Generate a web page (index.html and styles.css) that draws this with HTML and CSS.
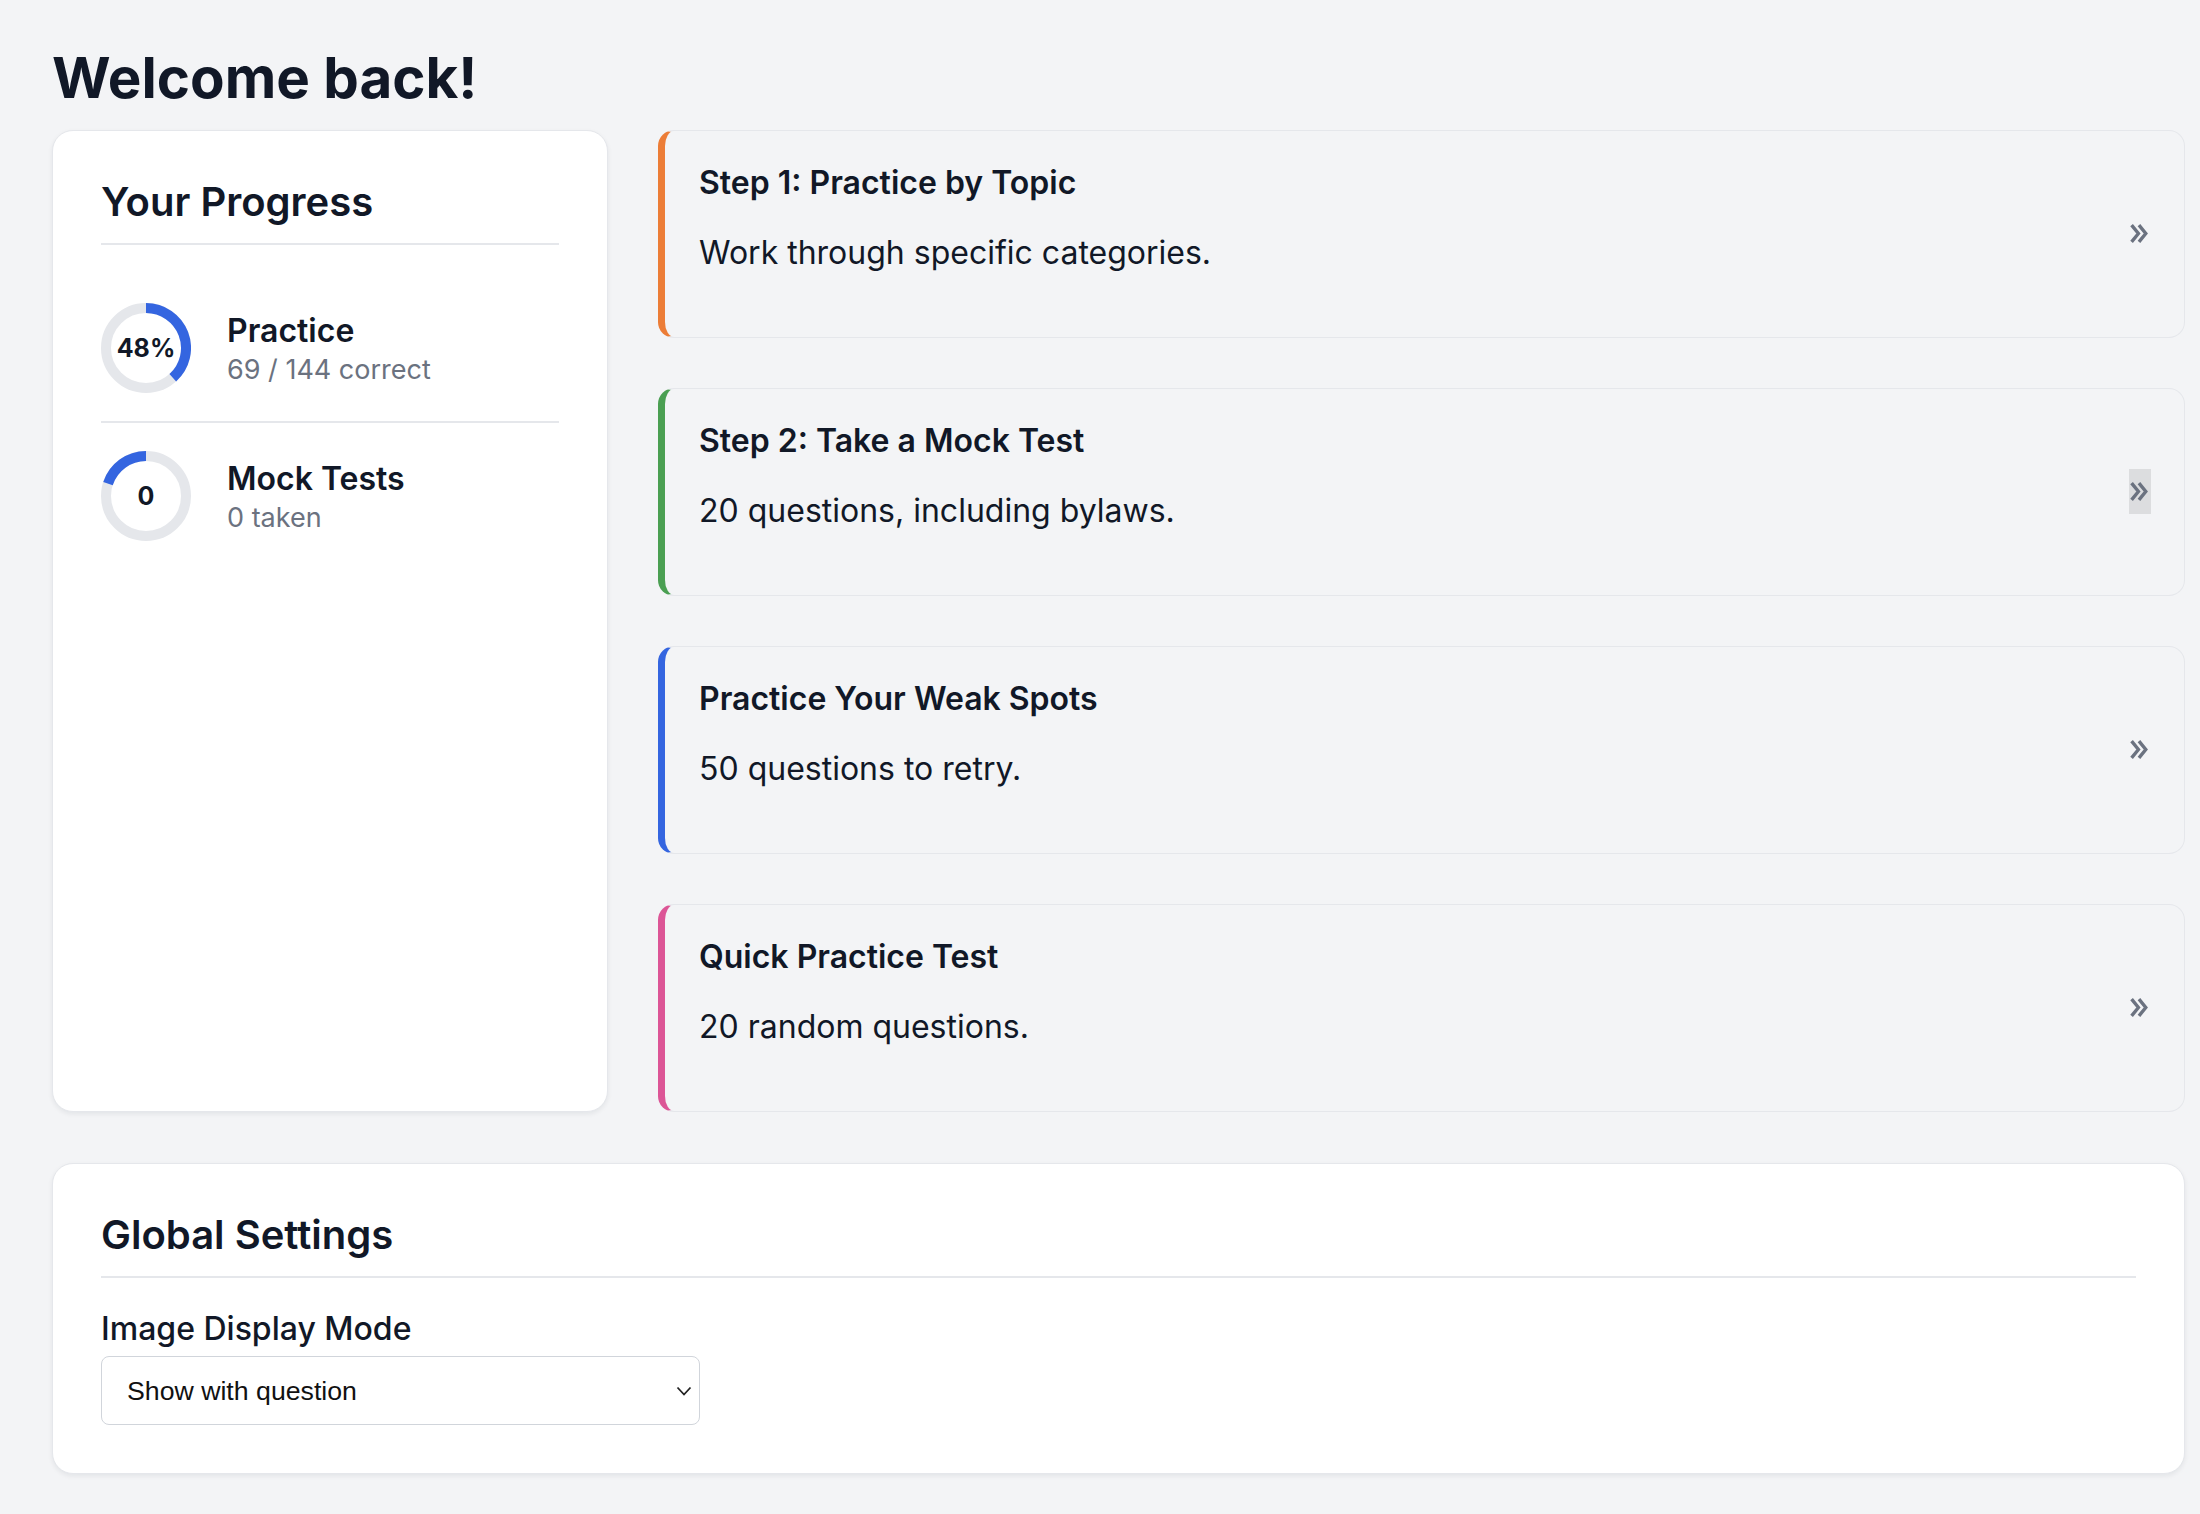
FILE: index.html
```html
<!DOCTYPE html>
<html lang="en">
<head>
<meta charset="utf-8">
<title>Dashboard</title>
<link rel="stylesheet" href="styles.css">
</head>
<body>
<main class="page">
  <h1 class="welcome">Welcome back!</h1>
  <div class="grid">
    <section class="card progress">
      <h2 class="card-title">Your Progress</h2>
      <div class="stat">
        <div class="ring">
          <svg viewBox="0 0 90 90" width="90" height="90">
            <circle cx="45" cy="45" r="40" fill="none" stroke="#e5e7eb" stroke-width="10"/>
            <path d="M45 5 A40 40 0 0 1 71.8 74.7" fill="none" stroke="#3465e0" stroke-width="10"/>
          </svg>
          <span class="ring-label">48%</span>
        </div>
        <div class="stat-text">
          <div class="stat-name">Practice</div>
          <div class="stat-sub">69 / 144 correct</div>
        </div>
      </div>
      <div class="stat">
        <div class="ring">
          <svg viewBox="0 0 90 90" width="90" height="90">
            <circle cx="45" cy="45" r="40" fill="none" stroke="#e5e7eb" stroke-width="10"/>
            <path d="M7 32.6 A40 40 0 0 1 45 5" fill="none" stroke="#3465e0" stroke-width="10"/>
          </svg>
          <span class="ring-label">0</span>
        </div>
        <div class="stat-text">
          <div class="stat-name">Mock Tests</div>
          <div class="stat-sub">0 taken</div>
        </div>
      </div>
    </section>
    <div class="steps">
      <a class="step step-orange" href="#">
        <div class="step-body">
          <div class="step-title">Step 1: Practice by Topic</div>
          <div class="step-desc">Work through specific categories.</div>
        </div>
        <span class="go"><svg viewBox="0 0 19 18" width="20" height="19"><polyline points="1.5,1 8,9 1.5,17" /><polyline points="8.5,1 15,9 8.5,17" /></svg></span>
      </a>
      <a class="step step-green" href="#">
        <div class="step-body">
          <div class="step-title">Step 2: Take a Mock Test</div>
          <div class="step-desc">20 questions, including bylaws.</div>
        </div>
        <span class="go go-active"><svg viewBox="0 0 19 18" width="20" height="19"><polyline points="1.5,1 8,9 1.5,17" /><polyline points="8.5,1 15,9 8.5,17" /></svg></span>
      </a>
      <a class="step step-blue" href="#">
        <div class="step-body">
          <div class="step-title">Practice Your Weak Spots</div>
          <div class="step-desc">50 questions to retry.</div>
        </div>
        <span class="go"><svg viewBox="0 0 19 18" width="20" height="19"><polyline points="1.5,1 8,9 1.5,17" /><polyline points="8.5,1 15,9 8.5,17" /></svg></span>
      </a>
      <a class="step step-pink" href="#">
        <div class="step-body">
          <div class="step-title">Quick Practice Test</div>
          <div class="step-desc">20 random questions.</div>
        </div>
        <span class="go"><svg viewBox="0 0 19 18" width="20" height="19"><polyline points="1.5,1 8,9 1.5,17" /><polyline points="8.5,1 15,9 8.5,17" /></svg></span>
      </a>
    </div>
  </div>
  <section class="card settings">
    <h2 class="card-title settings-title">Global Settings</h2>
    <label class="field-label" for="imgmode">Image Display Mode</label>
    <div class="select-wrap">
      <select id="imgmode" class="select">
        <option>Show with question</option>
        <option>Show after answer</option>
        <option>Hide images</option>
      </select>
      <svg class="select-arrow" viewBox="0 0 16 10" width="16" height="10"><polyline points="1.5,1.5 8,8.5 14.5,1.5"/></svg>
    </div>
  </section>
</main>
</body>
</html>
```

FILE: styles.css
```css
* { box-sizing: border-box; }

html, body {
  margin: 0;
  background: #f3f4f6;
}

body {
  font-family: "Inter", "Noto Sans", sans-serif;
  color: #111827;
}

.page {
  padding: 45px 15px 40px 52px;
}

.welcome {
  margin: 0 0 18px;
  font-size: 56.5px;
  line-height: 1.18;
  font-weight: 700;
  color: #111827;
}

.grid {
  display: grid;
  grid-template-columns: 556px 1fr;
  column-gap: 50px;
}

.card {
  background: #ffffff;
  border: 1px solid #e5e7eb;
  border-radius: 21px;
  box-shadow: 0 2px 5px rgba(17, 24, 39, 0.07);
  padding: 48px;
}

.card-title {
  margin: 0 0 30px;
  padding-bottom: 18px;
  border-bottom: 2px solid #e5e7eb;
  font-size: 40px;
  line-height: 1.17;
  font-weight: 600;
}

.stat {
  display: flex;
  align-items: center;
  gap: 36px;
  padding: 28px 0;
  border-bottom: 2px solid #e5e7eb;
}

.stat:last-child {
  border-bottom: none;
}

.ring {
  position: relative;
  width: 90px;
  height: 90px;
  flex: none;
}

.ring svg {
  display: block;
}

.ring-label {
  position: absolute;
  inset: 0;
  display: flex;
  align-items: center;
  justify-content: center;
  font-size: 25px;
  font-weight: 700;
  color: #111827;
}

.stat-text {
  padding-top: 7px;
}

.stat-name {
  font-size: 32px;
  line-height: 1.15;
  font-weight: 600;
}

.stat-sub {
  font-size: 27px;
  line-height: 1.55;
  color: #6b7280;
}

.steps {
  display: flex;
  flex-direction: column;
  gap: 50px;
}

.step {
  display: flex;
  align-items: center;
  height: 208px;
  padding: 0 33px 0 34px;
  background: #f3f4f6;
  border: 1.4px solid #e5e7eb;
  border-left: 7px solid #ec7d37;
  border-radius: 16px;
  color: #111827;
  text-decoration: none;
}

.step-green { border-left-color: #4a9f52; }
.step-blue { border-left-color: #3465e0; }
.step-pink { border-left-color: #dc5596; }

.step-body {
  flex: 1;
  padding-top: 4px;
}

.step-title {
  font-size: 32px;
  line-height: 1.2;
  font-weight: 600;
}

.step-desc {
  margin-top: 27px;
  margin-bottom: 30px;
  font-size: 32px;
  line-height: 1.5;
  font-weight: 400;
}

.go {
  width: 22px;
  height: 45px;
  display: flex;
  align-items: center;
  justify-content: center;
  flex: none;
}

.go-active {
  background: #dcdddf;
}

.go svg polyline {
  fill: none;
  stroke: #6b7280;
  stroke-width: 3.2;
  stroke-linejoin: miter;
}

.settings {
  margin-top: 51px;
}

.settings-title {
  margin-bottom: 27px;
}

.field-label {
  display: block;
  margin-bottom: 3px;
  font-size: 32px;
  line-height: 1.5;
  font-weight: 500;
  color: #111827;
}

.select-wrap {
  position: relative;
  width: 599px;
}

.select {
  display: block;
  width: 100%;
  height: 69px;
  padding: 0 40px 0 25px;
  appearance: none;
  -webkit-appearance: none;
  background: #ffffff;
  border: 1.4px solid #d1d5db;
  border-radius: 8px;
  font-family: "Liberation Sans", Arial, sans-serif;
  font-size: 26.7px;
  color: #111111;
}

.select-arrow {
  position: absolute;
  right: 8px;
  top: 50%;
  margin-top: -5px;
  pointer-events: none;
}

.select-arrow polyline {
  fill: none;
  stroke: #222222;
  stroke-width: 1.8;
}
```
